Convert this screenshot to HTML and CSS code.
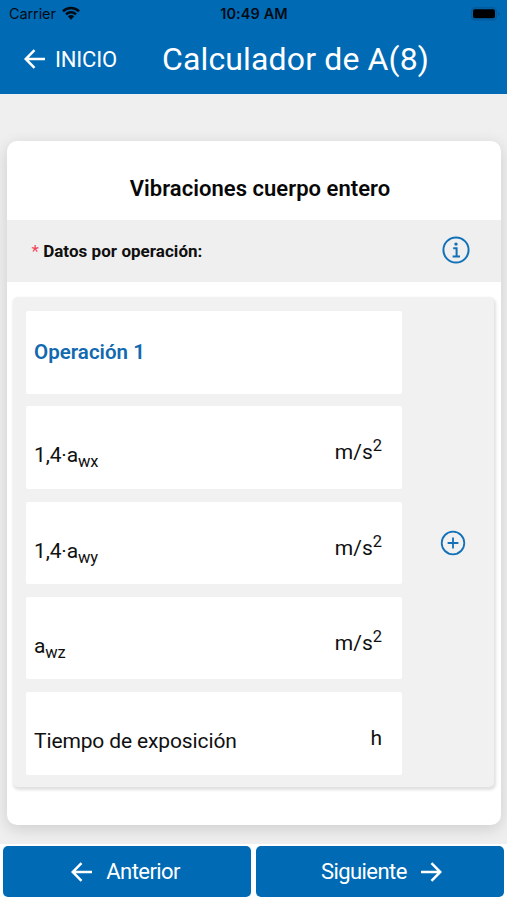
FILE: index.html
```html
<!DOCTYPE html>
<html lang="es">
<head>
<meta charset="utf-8">
<title>Calculador de A(8)</title>
<link rel="stylesheet" href="styles.css">
</head>
<body>
<header class="header">
  <div class="status">
    <div class="carrier"><span>Carrier</span>
      <svg class="wifi" width="18" height="14" viewBox="0 0 18 14"><path d="M1 5.4C5.4 .9 12.6 .9 17 5.4M4 8.3C6.8 5.5 11.2 5.5 14 8.3" fill="none" stroke="#020b14" stroke-width="2.5"/><path d="M5.8 10.3C7.6 8.6 10.4 8.6 12.2 10.3L9 13.7Z" fill="#020b14"/></svg>
    </div>
    <span class="time">10:49 AM</span>
    <svg class="battery" width="30" height="14" viewBox="0 0 30 14"><rect x=".8" y=".8" width="24.4" height="12.2" rx="3.4" fill="none" stroke="#075796" stroke-width="1.2"/><rect x="2" y="2.2" width="22" height="9" rx="2" fill="#000"/><path d="M27 5v4q1.600-.5 1.600-2T27 5" fill="#075796"/></svg>
  </div>
  <div class="toolbar">
    <a class="home"><svg class="arrow" width="22" height="20" viewBox="0 0 22 20"><path d="M10.500 1.200 1.700 10l8.800 8.800M2 10h19"/></svg><span>INICIO</span></a>
    <h1 class="page-title">Calculador de A(8)</h1>
  </div>
</header>
<main class="content">
  <section class="card">
    <h2 class="card-title">Vibraciones cuerpo entero</h2>
    <div class="section-row">
      <p class="section-label"><span class="required">*</span> Datos por operación:</p>
      <svg class="info" width="28" height="28" viewBox="0 0 28 28"><circle cx="14" cy="14" r="12.600"/><path d="M11.200 12.300H14.600V20.200M10.600 20.600H18"/><circle class="dot" cx="14" cy="8.100" r="1.700"/></svg>
    </div>
    <div class="panel">
      <div class="fields">
        <div class="field"><span class="operation">Operación 1</span></div>
        <div class="field"><span class="name">1,4·a<sub>wx</sub></span><span class="unit">m/s<sup>2</sup></span></div>
        <div class="field"><span class="name">1,4·a<sub>wy</sub></span><span class="unit">m/s<sup>2</sup></span></div>
        <div class="field"><span class="name">a<sub>wz</sub></span><span class="unit">m/s<sup>2</sup></span></div>
        <div class="field"><span class="name">Tiempo de exposición</span><span class="unit">h</span></div>
      </div>
      <div class="add"><svg width="26" height="26" viewBox="0 0 26 26"><circle cx="13" cy="13" r="11.300"/><path d="M13 7.600v10.800M7.600 13h10.800"/></svg></div>
    </div>
  </section>
</main>
<footer class="footer">
  <button class="nav prev"><svg class="arrow" width="22" height="20" viewBox="0 0 22 20"><path d="M10.500 1.200 1.700 10l8.800 8.800M2 10h19"/></svg><span>Anterior</span></button>
  <button class="nav next"><span>Siguiente</span><svg class="arrow" width="22" height="20" viewBox="0 0 22 20"><path d="M11.500 1.200 20.300 10l-8.800 8.800M20 10H1"/></svg></button>
</footer>
</body>
</html>
```
FILE: styles.css
```css
* { box-sizing: border-box; }
body {
  margin: 0;
  height: 900px;
  display: flex;
  flex-direction: column;
  overflow: hidden;
  background: #fff;
  color: #101010;
  font-family: Roboto, "Liberation Sans", sans-serif;
}
h1, h2, p { margin: 0; font-weight: 400; }
.header { height: 93.500px; flex: none; background: #006ab5; }
.status {
  height: 28px;
  display: grid;
  grid-template-columns: 1fr auto 1fr;
  align-items: center;
  padding: 0 8px 0 9px;
  color: #020b14;
  font: 14.500px/28px Inter, sans-serif;
}
.carrier { display: flex; align-items: center; gap: 6px; letter-spacing: -.1px; }
.wifi { margin-top: -2px; }
.time { font-weight: 600; letter-spacing: .1px; }
.battery { justify-self: end; margin: -1px -2px 0 0; }
.toolbar { height: 62px; display: flex; align-items: center; color: #fff; }
.home { display: flex; align-items: center; width: 162px; padding-left: 24px; gap: 9px; font-size: 22px; letter-spacing: -.2px; }
.arrow { fill: none; stroke: #fff; stroke-width: 2.500; flex: none; }
.page-title { font-size: 32px; letter-spacing: .14px; white-space: nowrap; }
.content { height: 750px; flex: none; background: #efefef; padding: 47.500px 6px 0 7px; overflow: hidden; }
.card {
  height: 684px;
  background: #fff;
  border-radius: 10px;
  box-shadow: 0 4px 16px rgba(0, 0, 0, .14);
}
.card-title { height: 79px; line-height: 95px; text-align: center; font-size: 22px; font-weight: 600; color: #080808; padding-left: 12px; letter-spacing: .04px; }
.section-row { height: 61.500px; display: flex; align-items: center; justify-content: space-between; padding: 0 31px 2px 24.500px; background: #efefef; }
.section-label { padding-top: 2px; font-size: 17px; font-weight: 700; color: #101010; letter-spacing: .04px; }
.required { color: #f0445a; font-weight: 400; }
.info, .add svg { fill: none; stroke: #1271b8; stroke-width: 2; }
.info .dot { fill: #1271b8; stroke: none; }
.panel {
  display: flex;
  margin: 15.500px 7px 0 6px;
  height: 490px;
  padding: 14px 0 0 13px;
  background: #f1f1f1;
  border-radius: 5px;
  box-shadow: 1px 2px 3px 1px rgba(0, 0, 0, .12);
}
.fields { width: 375.500px; display: flex; flex-direction: column; gap: 12.800px; }
.field {
  height: 82.500px;
  display: flex;
  justify-content: space-between;
  padding: 0 19.500px 0 8px;
  background: #fff;
  border-radius: 2px;
  font-size: 21px;
  line-height: 24px;
  letter-spacing: -.13px;
}
.operation { padding-top: 29px; font-size: 20.500px; font-weight: 600; color: #1269b0; letter-spacing: .03px; }
.name { padding-top: 37px; }
.unit { padding-top: 34px; letter-spacing: 0; }
sub, sup { font-size: 16.500px; line-height: 0; }
.add { flex: 1; padding: 219px 0 0 38px; }
.add svg { stroke-width: 1.800; }
.footer { flex: 1; display: flex; gap: 5px; padding: 2.500px 3px 3px; background: #fff; }
.nav {
  flex: 1;
  display: flex;
  align-items: center;
  justify-content: center;
  border: 0;
  border-radius: 5px;
  background: #006ab5;
  color: #fff;
  font: 22px Roboto, sans-serif;
  letter-spacing: -.55px;
}
.prev { gap: 13px; padding: 0 9px 0 6px; }
.next { gap: 13px; padding: 0 6px 0 8.500px; }
```
